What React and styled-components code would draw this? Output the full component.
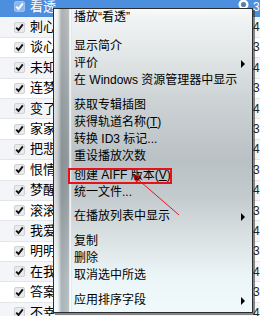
import React from 'react';
import styled, { createGlobalStyle } from 'styled-components';

const GlobalStyle = createGlobalStyle`
  html, body {
    margin: 0;
    padding: 0;
    background: #fff;
    overflow: hidden;
  }
  #root {
    width: 260px;
    height: 316px;
    overflow: hidden;
  }
`;

const Page = styled.div`
  position: relative;
  width: 260px;
  height: 316px;
  overflow: hidden;
  font-family: "Liberation Sans", "Noto Sans CJK SC", sans-serif;
`;

// background song list
const List = styled.div`
  display: flex;
  flex-direction: column;
  margin-top: -3px;
`;

const Row = styled.div`
  display: flex;
  align-items: center;
  height: 20.4px;
  flex-shrink: 0;
  box-sizing: border-box;
  padding-left: 14px;
  border-bottom: 1px solid ${(p) => (p.$selected ? '#4a8ddc' : '#e3e5e8')};
  background: ${(p) => (p.$selected ? '#4b8fde' : p.$alt ? '#f3f5f8' : '#ffffff')};
  color: ${(p) => (p.$selected ? '#ffffff' : '#000000')};
`;

const Check = styled.span`
  display: flex;
  align-items: center;
  justify-content: center;
  width: 11px;
  height: 11px;
  box-sizing: border-box;
  border-radius: 2px;
  border: 1px solid ${(p) => (p.$selected ? '#9cc1ee' : '#cfd1d4')};
  background: ${(p) => (p.$selected ? '#8db7ec' : '#e9eaec')};
  svg {
    display: block;
  }
`;

const Title = styled.span`
  margin-left: 5px;
  font-size: 13px;
  line-height: 20px;
  flex: 1;
  white-space: nowrap;
`;

const LinkIcon = styled.span`
  display: flex;
  width: 11px;
  height: 11px;
  margin-right: 4px;
  margin-top: -5px;
`;

const TimeCell = styled.span`
  width: 7px;
  flex-shrink: 0;
  overflow: hidden;
  white-space: nowrap;
  font-size: 12px;
  line-height: 20px;
  color: ${(p) => (p.$selected ? '#ffffff' : '#222')};
`;

// context menu
const Menu = styled.div`
  position: absolute;
  left: 53px;
  top: 8px;
  width: 198px;
  height: 303px;
  border: 1px solid #2b2d2e;
  box-shadow: 2px 2px 0 rgba(40, 40, 40, 0.55);
  display: flex;
  background: linear-gradient(
    to bottom,
    #f4f6f6 0%,
    #e6eaeb 12%,
    #cdd3d5 30%,
    #bac1c4 50%,
    #c4cbce 62%,
    #dae2e4 76%,
    #ebf4f6 88%,
    #f0fafc 100%
  );
`;

const Gutter = styled.div`
  width: 18px;
  flex-shrink: 0;
  background: linear-gradient(
    to right,
    rgba(255, 255, 255, 0.4) 0%,
    rgba(255, 255, 255, 0.1) 20%,
    rgba(50, 60, 66, 0.36) 42%,
    rgba(50, 60, 66, 0.3) 80%,
    rgba(255, 255, 255, 0.7) 88%,
    rgba(255, 255, 255, 0.7) 94%,
    rgba(90, 100, 105, 0.18) 100%
  );
`;

const Body = styled.div`
  position: relative;
  flex: 1;
  display: flex;
  flex-direction: column;

  &::before {
    content: '';
    position: absolute;
    left: 0;
    right: 0;
    top: 0;
    height: 22px;
    background: radial-gradient(ellipse 120% 100% at 60% -30%, rgba(255, 255, 255, 0.85), rgba(255, 255, 255, 0) 75%);
    pointer-events: none;
  }
`;

const Item = styled.div`
  position: relative;
  display: flex;
  align-items: center;
  height: 17px;
  flex-shrink: 0;
  padding-left: 2px;
  padding-right: 7px;
  font-size: 12px;
  color: #000;
  white-space: nowrap;
  z-index: 1;
`;

const Label = styled.span`
  flex: 1;
  line-height: 17px;
`;

const SubArrow = styled.span`
  width: 0;
  height: 0;
  border-top: 4px solid transparent;
  border-bottom: 4px solid transparent;
  border-left: 4px solid #000;
`;

const Gap = styled.div`
  height: ${(p) => p.$h}px;
  flex-shrink: 0;
`;

const MarkBox = styled.span`
  position: absolute;
  left: -4px;
  top: 1px;
  width: 104px;
  height: 16px;
  box-sizing: border-box;
  border: 2px solid #e5121b;
  pointer-events: none;
`;

const Annotation = styled.svg`
  position: absolute;
  left: 0;
  top: 0;
  pointer-events: none;
`;

const songs = [
  ['看透', '3:58'], ['刺心', '4:12'], ['谈心', '3:41'], ['未知', '4:05'],
  ['连梦', '3:27'], ['变了', '4:30'], ['家家', '3:49'], ['把悲', '4:18'],
  ['恨情', '3:36'], ['梦醒', '4:02'], ['滚滚', '3:55'], ['我爱', '4:21'],
  ['明明', '3:44'], ['在我', '4:09'], ['答案', '3:52'], ['不幸', '4:15'],
];

const menu = [
  { label: '播放“看透”' },
  { gap: 12 },
  { label: '显示简介' },
  { label: '评价', sub: true },
  { label: '在 Windows 资源管理器中显示' },
  { gap: 8 },
  { label: '获取专辑插图' },
  { label: <>获得轨道名称(<u>T</u>)</> },
  { label: '转换 ID3 标记...' },
  { label: '重设播放次数' },
  { gap: 2 },
  { label: <>创建 AIFF 版本(<u>V</u>)</>, marked: true },
  { label: '统一文件...' },
  { gap: 7 },
  { label: '在播放列表中显示', sub: true },
  { gap: 8 },
  { label: '复制' },
  { label: '删除' },
  { label: '取消选中所选' },
  { gap: 8 },
  { label: '应用排序字段', sub: true },
];

const CheckMark = ({ color }) => (
  <svg width="9" height="9" viewBox="0 0 9 9">
    <path d="M1.2 4.6 L3.5 7 L7.8 1.4" fill="none" stroke={color} strokeWidth="1.9" />
  </svg>
);

export default function App() {
  return (
    <Page>
      <GlobalStyle />
      <List>
        {songs.map(([name, time], i) => (
          <Row key={name} $selected={i === 0} $alt={i % 2 === 1}>
            <Check $selected={i === 0}>
              <CheckMark color={i === 0 ? '#ffffff' : '#111'} />
            </Check>
            <Title>{name}</Title>
            {i === 0 && (
              <LinkIcon>
                <svg width="11" height="11" viewBox="0 0 11 11">
                  <circle cx="5.5" cy="5.5" r="5" fill="#ffffff" />
                  <circle cx="5.5" cy="5.5" r="2.6" fill="#5d7fa6" />
                </svg>
              </LinkIcon>
            )}
            <TimeCell $selected={i === 0}>{time}</TimeCell>
          </Row>
        ))}
      </List>

      <Menu>
        <Gutter />
        <Body>
          {menu.map((m, i) =>
            m.gap ? (
              <Gap key={i} $h={m.gap} />
            ) : (
              <Item key={i}>
                <Label>{m.label}</Label>
                {m.sub && <SubArrow />}
                {m.marked && <MarkBox />}
              </Item>
            )
          )}
        </Body>
      </Menu>

      <Annotation width="260" height="316" viewBox="0 0 260 316">
        <line x1="138" y1="179.5" x2="179" y2="215" stroke="#e5121b" strokeWidth="1" />
        <polygon points="132,174 141.5,177 136.5,183" fill="#e5121b" />
      </Annotation>
    </Page>
  );
}
